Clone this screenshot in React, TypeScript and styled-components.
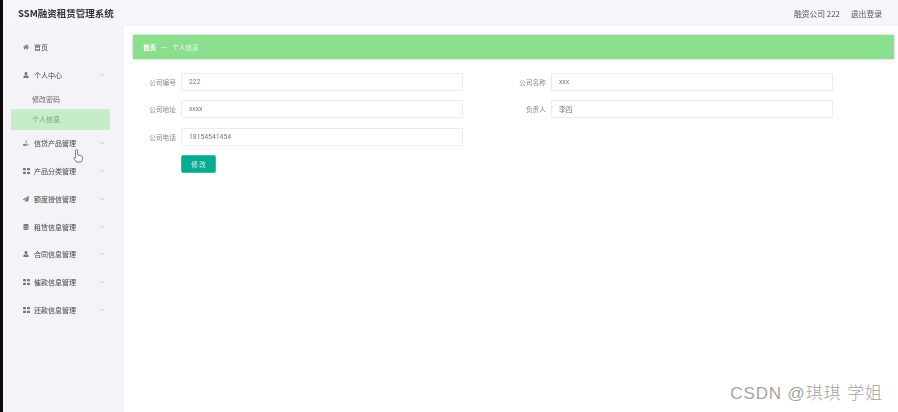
import React from "react";
import styled, { createGlobalStyle } from "styled-components";
import { ChevronDown } from "lucide-react";
import {
  FaHome,
  FaUser,
  FaPaperPlane,
  FaHandHoldingUsd,
  FaDatabase,
} from "react-icons/fa";

const GlobalStyle = createGlobalStyle`
  html, body {
    margin: 0;
    padding: 0;
    height: 100%;
    overflow: hidden;
    background: #fff;
    font-family: "Noto Sans CJK SC", "Roboto", sans-serif;
  }
`;

const Page = styled.div`
  position: relative;
  height: 100vh;
  border-left: 3px solid #0a0a0a;
  box-sizing: border-box;
  overflow: hidden;
`;

const Shell = styled.div`
  display: flex;
  flex-direction: column;
  height: 100%;
  filter: blur(0.5px);
`;

const TopBar = styled.header`
  flex: 0 0 26px;
  display: flex;
  align-items: center;
  justify-content: space-between;
  padding: 0 16px 0 15px;
  background: #f5f5fa;
`;

const Title = styled.div`
  font-size: 9.5px;
  font-weight: 700;
  color: #333;
`;

const UserBox = styled.div`
  display: flex;
  gap: 11px;
  font-size: 7.8px;
  color: #555;
`;

const Body = styled.div`
  flex: 1;
  display: flex;
  min-height: 0;
`;

const Sidebar = styled.nav`
  flex: 0 0 121px;
  box-sizing: border-box;
  padding: 7px 14px 0 8px;
  background: #f4f4f8;
`;

const MenuRow = styled.div`
  position: relative;
  height: 27.75px;
  display: flex;
  align-items: center;
  padding-left: 12px;
  font-size: 7px;
  color: #444;
`;

const MenuIcon = styled.span`
  flex: 0 0 8px;
  display: flex;
  align-items: center;
  margin-right: 3px;
  font-size: 6px;
  color: #777;
`;

const Chevron = styled(ChevronDown)`
  margin-left: auto;
  margin-right: 4px;
  color: #bbb;
`;

const SubMenu = styled.div<{ $active?: boolean }>`
  height: 20.5px;
  display: flex;
  align-items: center;
  padding-left: 21px;
  font-size: 7px;
  color: ${(p) => (p.$active ? "#7f9f84" : "#666")};
  background: ${(p) => (p.$active ? "#c6ecc8" : "transparent")};
`;

const HandCursor = styled.svg`
  position: absolute;
  left: 62px;
  top: 19px;
`;

const Main = styled.main`
  flex: 1;
  min-width: 0;
  box-sizing: border-box;
  padding: 9px 4px 0 9px;
  background: #fff;
`;

const Breadcrumb = styled.div`
  height: 24px;
  display: flex;
  align-items: center;
  gap: 5px;
  padding-left: 10px;
  background: #8adf8e;
  box-shadow: 0 0 3px rgba(0, 0, 0, 0.25);
  font-size: 6.5px;
  color: #e8f8ea;
`;

const Crumb = styled.span<{ $strong?: boolean }>`
  font-weight: ${(p) => (p.$strong ? 700 : 400)};
  color: ${(p) => (p.$strong ? "#fff" : "#e8f8ea")};
`;

const Form = styled.form`
  display: grid;
  grid-template-columns: 330px 330px;
  column-gap: 40px;
  row-gap: 9.25px;
  padding-top: 14px;
`;

const Field = styled.div`
  display: flex;
  align-items: center;
  gap: 5px;
`;

const Label = styled.label`
  flex: 0 0 43px;
  text-align: right;
  font-size: 6.7px;
  color: #888;
`;

const Input = styled.input`
  flex: 0 0 282px;
  width: 282px;
  height: 18px;
  box-sizing: border-box;
  padding: 0 7px;
  border: 1px solid #ebebef;
  border-radius: 2px;
  background: #fff;
  outline: none;
  font-family: "Roboto", "Noto Sans CJK SC", sans-serif;
  font-size: 6.8px;
  color: #777;
`;

const Actions = styled.div`
  grid-column: 1 / -1;
  display: flex;
  padding-left: 48px;
`;

const SaveButton = styled.button`
  width: 35px;
  height: 18px;
  padding: 0;
  border: 1px solid #2fc3a5;
  border-radius: 2px;
  background: #07ab8f;
  font-family: inherit;
  font-size: 6.5px;
  color: #d8f5ee;
`;

const Watermark = styled.div`
  position: absolute;
  right: 15px;
  bottom: 8px;
  font-family: "Liberation Sans", "Noto Sans CJK SC", sans-serif;
  font-size: 17px;
  font-weight: 300;
  letter-spacing: 0.9px;
  color: #a3a3a3;
  white-space: nowrap;
`;

function GridIcon() {
  return (
    <svg width="7" height="6" viewBox="0 0 7 6" fill="currentColor">
      <rect x="0" y="0" width="3" height="2.3" rx="0.5" />
      <rect x="4" y="0" width="3" height="2.3" rx="0.5" />
      <rect x="0" y="3.7" width="3" height="2.3" rx="0.5" />
      <rect x="4" y="3.7" width="3" height="2.3" rx="0.5" />
    </svg>
  );
}

const afterOpen = [
  { name: "信贷产品管理", icon: <FaHandHoldingUsd />, hover: true },
  { name: "产品分类管理", icon: <GridIcon /> },
  { name: "额度授信管理", icon: <FaPaperPlane /> },
  { name: "租赁信息管理", icon: <FaDatabase /> },
  { name: "合同信息管理", icon: <FaUser /> },
  { name: "催款信息管理", icon: <GridIcon /> },
  { name: "还款信息管理", icon: <GridIcon /> },
];

const fields = [
  { label: "公司编号", value: "222" },
  { label: "公司名称", value: "xxx" },
  { label: "公司地址", value: "xxxx" },
  { label: "负责人", value: "李四" },
  { label: "公司电话", value: "18154541454" },
];

export default function App() {
  return (
    <Page>
      <GlobalStyle />
      <Shell>
        <TopBar>
          <Title>SSM融资租赁管理系统</Title>
          <UserBox>
            <span>融资公司 222</span>
            <span>退出登录</span>
          </UserBox>
        </TopBar>
        <Body>
          <Sidebar>
            <MenuRow>
              <MenuIcon>
                <FaHome />
              </MenuIcon>
              首页
            </MenuRow>
            <MenuRow>
              <MenuIcon>
                <FaUser />
              </MenuIcon>
              个人中心
              <Chevron size={8} />
            </MenuRow>
            <SubMenu>修改密码</SubMenu>
            <SubMenu $active>个人信息</SubMenu>
            {afterOpen.map((item) => (
              <MenuRow key={item.name}>
                <MenuIcon>{item.icon}</MenuIcon>
                {item.name}
                <Chevron size={8} />
                {item.hover && (
                  <HandCursor width="10" height="14" viewBox="0 0 10 14">
                    <path
                      d="M2.5 7.5V1.8a1.1 1.1 0 0 1 2.2 0V6l3 .6c1 .2 1.6.8 1.6 1.8v1.8c0 1.2-.6 2.3-1.2 2.8H3.6L.8 9.6c-.5-.7.6-1.6 1.7-.7z"
                      fill="#fff"
                      stroke="#555"
                      strokeWidth="0.8"
                    />
                  </HandCursor>
                )}
              </MenuRow>
            ))}
          </Sidebar>
          <Main>
            <Breadcrumb>
              <Crumb $strong>首页</Crumb>
              <Crumb>一</Crumb>
              <Crumb>个人信息</Crumb>
            </Breadcrumb>
            <Form>
              {fields.map((f) => (
                <Field key={f.label}>
                  <Label>{f.label}</Label>
                  <Input defaultValue={f.value} />
                </Field>
              ))}
              <Actions>
                <SaveButton type="button">修 改</SaveButton>
              </Actions>
            </Form>
          </Main>
        </Body>
      </Shell>
      <Watermark>CSDN @琪琪 学姐</Watermark>
    </Page>
  );
}
